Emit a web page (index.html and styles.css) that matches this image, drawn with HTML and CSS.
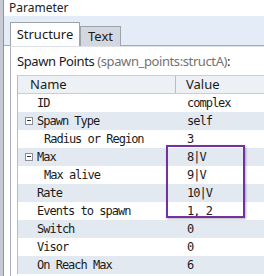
FILE: index.html
```html
<!DOCTYPE html>
<html>
<head>
<meta charset="utf-8">
<link rel="stylesheet" href="styles.css">
</head>
<body>
<div class="side"></div>
<div class="main">
  <div class="title">Parameter</div>
  <div class="tabstrip">
    <div class="tab active">Structure</div>
    <div class="tab">Text</div>
  </div>
  <div class="panel">
    <div class="label">Spawn Points <span class="type">(spawn_points:structA)</span>:</div>
    <div class="grid">
      <div class="row head"><div class="c name">Name</div><div class="c val">Value</div></div>
      <div class="row"><div class="c name l1">ID</div><div class="c val">complex</div></div>
      <div class="row alt"><div class="c name l0"><span class="minus"></span>Spawn Type</div><div class="c val">self</div></div>
      <div class="row"><div class="c name l2">Radius or Region</div><div class="c val">3</div></div>
      <div class="row alt"><div class="c name l0"><span class="minus"></span>Max</div><div class="c val">8|V</div></div>
      <div class="row"><div class="c name l2">Max alive</div><div class="c val">9|V</div></div>
      <div class="row alt"><div class="c name l1">Rate</div><div class="c val">10|V</div></div>
      <div class="row"><div class="c name l1">Events to spawn</div><div class="c val">1, 2</div></div>
      <div class="row alt"><div class="c name l1">Switch</div><div class="c val">0</div></div>
      <div class="row"><div class="c name l1">Visor</div><div class="c val">0</div></div>
      <div class="row alt"><div class="c name l1">On Reach Max</div><div class="c val">6</div></div>
    </div>
  </div>
</div>
<div class="mark"></div>
</body>
</html>
```
FILE: styles.css
```css
html, body {
  margin: 0;
  padding: 0;
}
body {
  width: 264px;
  height: 276px;
  overflow: hidden;
  display: flex;
  background: #fff;
  font-family: "Noto Sans", sans-serif;
  color: #1b1b1b;
  position: relative;
}
.side {
  width: 3px;
  flex: none;
  background: #c6cbd3;
  border-right: 1px solid #8e949c;
}
.main {
  flex: 1;
  display: flex;
  flex-direction: column;
  min-width: 0;
}
.title {
  height: 16px;
  line-height: 16px;
  font-size: 12px;
  padding-left: 5px;
  color: #222;
}
.tabstrip {
  height: 29px;
  background: #e4ecf7;
  border-bottom: 1px solid #a5abb3;
  display: flex;
  align-items: flex-end;
  padding-left: 6px;
}
.tab {
  box-sizing: border-box;
  height: 20px;
  width: 41px;
  margin-bottom: -1px;
  background: #d3d8e0;
  border: 1px solid #9ea4ac;
  border-bottom: none;
  font-size: 13px;
  line-height: 19px;
  text-align: center;
}
.tab.active {
  height: 24px;
  width: 70px;
  background: #fff;
  line-height: 23px;
  position: relative;
  z-index: 1;
  margin-bottom: -1px;
}
.panel {
  flex: 1;
  margin-left: 6px;
  border-left: 1px solid #a9afb6;
  border-top: 1px solid #dde2e8;
  padding: 5px 0 0 6px;
}
.label {
  font-size: 13px;
  letter-spacing: -0.4px;
  line-height: 19px;
  height: 18px;
  white-space: nowrap;
}
.type {
  color: #737373;
}
.grid {
  margin-top: 5px;
  border-left: 1px solid #b9bec5;
  border-top: 1px solid #c9ced4;
}
.row {
  display: flex;
  height: 18px;
  line-height: 18px;
  font-family: "DejaVu Sans Mono", monospace;
  font-size: 12px;
  letter-spacing: -1px;
  white-space: nowrap;
}
.row.alt {
  background: #e3e9f1;
}
.row.head {
  height: 17px;
  line-height: 17px;
  background: #edf0f4;
  border-bottom: 1px solid #c9ced4;
  font-family: "Noto Sans", sans-serif;
  font-size: 13px;
  letter-spacing: 0;
}
.c.name {
  width: 158px;
  flex: none;
  box-sizing: border-box;
  padding-left: 19px;
}
.head .c.name {
  padding-left: 12px;
  border-right: 1px solid #b9bec5;
}
.c.name.l0 {
  padding-left: 7px;
  display: flex;
  align-items: center;
}
.c.name.l2 {
  padding-left: 26px;
}
.c.val {
  padding-left: 11px;
}
.head .c.val {
  padding-left: 10px;
}
.minus {
  width: 8px;
  height: 8px;
  box-sizing: border-box;
  border: 1px solid #8c9096;
  background: #fff;
  margin-right: 4px;
  position: relative;
  flex: none;
}
.minus::after {
  content: "";
  position: absolute;
  left: 1px;
  top: 2px;
  width: 4px;
  height: 1px;
  background: #333;
}
.mark {
  position: absolute;
  left: 166px;
  top: 145px;
  width: 75px;
  height: 69px;
  border: 2px solid #7232a2;
  box-shadow: 1px 1px 2px rgba(0,0,0,0.3);
}
```
